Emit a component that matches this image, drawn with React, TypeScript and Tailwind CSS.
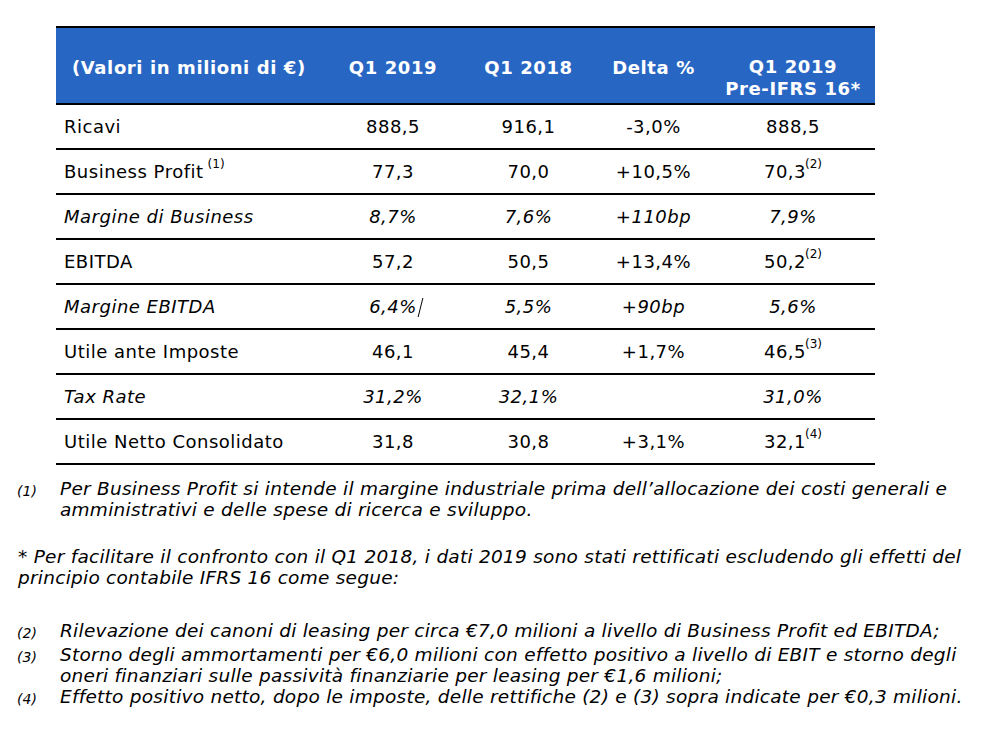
import React from "react";

const F = { fontFamily: '"DejaVu Sans", Verdana, sans-serif' };

type Row = { label: React.ReactNode; vals: React.ReactNode[]; italic?: boolean };

const Sup = ({ n, gap }: { n: string; gap?: boolean }) => (
  <sup className={`text-[12px] tracking-normal relative top-[-3px] align-super ${gap ? "ml-[4px]" : "ml-[-1px]"}`}>
    ({n})
  </sup>
);

const rows: Row[] = [
  { label: "Ricavi", vals: ["888,5", "916,1", "-3,0%", "888,5"] },
  {
    label: (
      <>
        Business Profit<Sup n="1" gap />
      </>
    ),
    vals: ["77,3", "70,0", "+10,5%", <>70,3<Sup n="2" /></>],
  },
  { label: "Margine di Business", vals: ["8,7%", "7,6%", "+110bp", "7,9%"], italic: true },
  { label: "EBITDA", vals: ["57,2", "50,5", "+13,4%", <>50,2<Sup n="2" /></>] },
  {
    label: "Margine EBITDA",
    vals: [
      <span className="relative">
        6,4%<span className="absolute right-[-4px] top-[2px] h-[19px] w-[1px] bg-black skew-x-[-14deg]" />
      </span>,
      "5,5%",
      "+90bp",
      "5,6%",
    ],
    italic: true,
  },
  { label: "Utile ante Imposte", vals: ["46,1", "45,4", "+1,7%", <>46,5<Sup n="3" /></>] },
  { label: "Tax Rate", vals: ["31,2%", "32,1%", "", "31,0%"], italic: true },
  { label: "Utile Netto Consolidato", vals: ["31,8", "30,8", "+3,1%", <>32,1<Sup n="4" /></>] },
];

const cols = "grid grid-cols-[269px_136px_135px_115px_164px]";

const Num = ({ n }: { n: string }) => (
  <div className="w-[60px] pl-[17px] text-[14px] tracking-normal pt-[3px] shrink-0">({n})</div>
);

export default function App() {
  return (
    <div className="w-[1004px] h-[738px] bg-white text-black overflow-hidden" style={F}>
      <div className="pt-[26px] pl-[56px]">
        <div className="w-[819px]">
          <div className="border-t-2 border-b-2 border-black">
            <div
              className={`${cols} h-[75px] pt-[4px] bg-[#2866c4] text-white font-bold text-[18px] tracking-[0.6px] items-center`}
            >
              <div className="pl-[16px]">(Valori in milioni di €)</div>
              <div className="text-center">Q1 2019</div>
              <div className="text-center">Q1 2018</div>
              <div className="text-center">Delta %</div>
              <div className="text-center leading-[22px] pt-[20px]">
                Q1 2019
                <br />
                Pre-IFRS 16*
              </div>
            </div>
          </div>
          {rows.map((r, i) => (
            <div
              key={i}
              className={`${cols} h-[45px] border-b-2 border-black items-center text-[18px] tracking-[0.5px] ${r.italic ? "italic" : ""}`}
            >
              <div className="pl-[8px]">{r.label}</div>
              {r.vals.map((v, j) => (
                <div key={j} className="text-center">
                  {v}
                </div>
              ))}
            </div>
          ))}
        </div>
      </div>

      <div className="italic text-[18.5px] tracking-[0.25px] leading-[21px] mt-[13px]">
        <div className="flex">
          <Num n="1" />
          <div className="whitespace-nowrap">
            Per Business Profit si intende il margine industriale prima dell’allocazione dei costi generali e
            <br />
            amministrativi e delle spese di ricerca e sviluppo.
          </div>
        </div>
        <div className="pl-[18px] mt-[26px] whitespace-nowrap">
          * Per facilitare il confronto con il Q1 2018, i dati 2019 sono stati rettificati escludendo gli effetti del
          <br />
          principio contabile IFRS 16 come segue:
        </div>
        <div className="mt-[32px] flex flex-col">
          <div className="flex">
            <Num n="2" />
            <div className="whitespace-nowrap">
              Rilevazione dei canoni di leasing per circa €7,0 milioni a livello di Business Profit ed EBITDA;
            </div>
          </div>
          <div className="flex">
            <Num n="3" />
            <div className="whitespace-nowrap">
              Storno degli ammortamenti per €6,0 milioni con effetto positivo a livello di EBIT e storno degli
              <br />
              oneri finanziari sulle passività finanziarie per leasing per €1,6 milioni;
            </div>
          </div>
          <div className="flex">
            <Num n="4" />
            <div className="whitespace-nowrap">
              Effetto positivo netto, dopo le imposte, delle rettifiche (2) e (3) sopra indicate per €0,3 milioni.
            </div>
          </div>
        </div>
      </div>
    </div>
  );
}
